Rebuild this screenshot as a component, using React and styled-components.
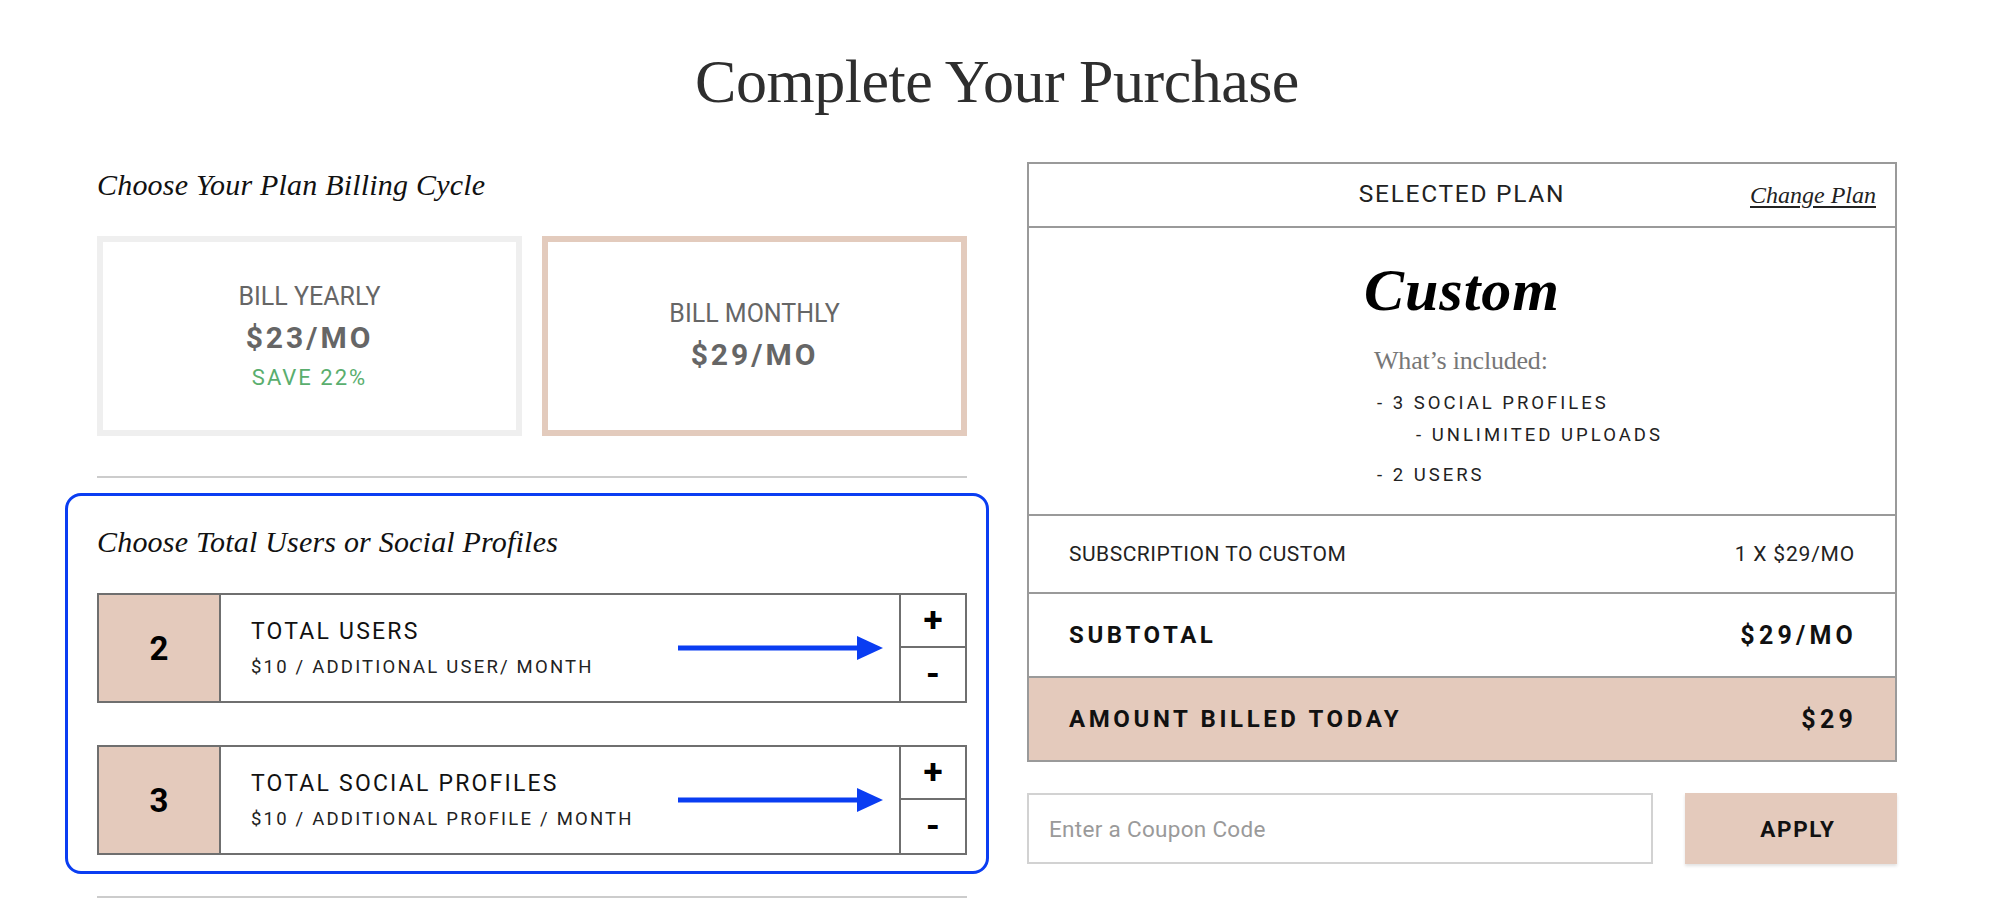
import React from "react";
import styled, { createGlobalStyle } from "styled-components";

const colors = {
  beige: "#e4cabc",
  blue: "#0a3df2",
  line: "#6f6f6f",
  panelLine: "#9a9a9a",
  text: "#1a1a1a",
  muted: "#666666",
  green: "#5aae6e",
};

const GlobalStyle = createGlobalStyle`
  body {
    margin: 0;
    background: #ffffff;
    font-family: Roboto, "Liberation Sans", Arial, sans-serif;
    color: ${colors.text};
  }
`;

const Page = styled.main`
  width: 1800px;
  margin: 0 auto;
  padding-top: 50px;
`;

const Title = styled.h1`
  margin: 0;
  font-family: "Liberation Serif", "Times New Roman", serif;
  font-weight: 400;
  font-size: 62px;
  line-height: 62px;
  letter-spacing: -0.5px;
  text-align: center;
  color: #2e2e2e;
`;

const Columns = styled.div`
  display: grid;
  grid-template-columns: 870px 870px;
  column-gap: 60px;
  align-items: start;
  margin-top: 50px;
`;

const LeftColumn = styled.section`
  display: flex;
  flex-direction: column;
`;

const SectionHeading = styled.h2`
  margin: ${(p) => (p.$first ? "8px 0 36px" : "0 0 36px")};
  font-family: "Liberation Serif", "Times New Roman", serif;
  font-style: italic;
  font-weight: 400;
  font-size: 30px;
  line-height: 30px;
  letter-spacing: 0.2px;
  color: #111111;
`;

const CycleGrid = styled.div`
  display: grid;
  grid-template-columns: 1fr 1fr;
  gap: 20px;
`;

const CycleCard = styled.button`
  height: 200px;
  box-sizing: border-box;
  border: 6px solid ${(p) => (p.$selected ? "#e3cbbd" : "#efefef")};
  background: #ffffff;
  display: flex;
  flex-direction: column;
  align-items: center;
  justify-content: center;
  font-family: inherit;
  cursor: pointer;
  padding: 0;
`;

const CycleName = styled.span`
  font-size: 25px;
  line-height: 30px;
  color: ${colors.muted};
`;

const CyclePrice = styled.span`
  margin-top: 8px;
  font-size: 30px;
  line-height: 36px;
  font-weight: 700;
  letter-spacing: 3px;
  color: ${colors.muted};
`;

const CycleSave = styled.span`
  margin-top: 9px;
  font-size: 22px;
  line-height: 26px;
  letter-spacing: 2px;
  color: ${colors.green};
`;

const Rule = styled.hr`
  margin: ${(p) => p.$margin};
  border: 0;
  height: 2px;
  background: #cccccc;
`;

const Highlight = styled.div`
  margin: 15px -22px 0 -32px;
  padding: 31px 19px 16px 29px;
  border: 3px solid ${colors.blue};
  border-radius: 16px;
`;

const StepperList = styled.div`
  display: flex;
  flex-direction: column;
  gap: 42px;
`;

const StepperRow = styled.div`
  display: grid;
  grid-template-columns: 122px 1fr 66px;
  height: 110px;
  box-sizing: border-box;
  border: 2px solid ${colors.line};
`;

const Count = styled.div`
  display: flex;
  align-items: center;
  justify-content: center;
  background: ${colors.beige};
  border-right: 2px solid ${colors.line};
  font-size: 33px;
  line-height: 33px;
  font-weight: 700;
  color: #000000;
`;

const StepperInfo = styled.div`
  display: flex;
  align-items: center;
  justify-content: space-between;
  padding: 0 16px 0 30px;
`;

const StepperText = styled.div`
  display: flex;
  flex-direction: column;
`;

const StepperTitle = styled.span`
  font-size: 23px;
  line-height: 28px;
  letter-spacing: 2.2px;
  color: #111111;
`;

const StepperHint = styled.span`
  margin-top: 10px;
  font-size: 18.5px;
  line-height: 22px;
  letter-spacing: 2.2px;
  color: #222222;
`;

const StepperButtons = styled.div`
  display: grid;
  grid-template-rows: 1fr 1fr;
  border-left: 2px solid ${colors.line};
`;

const StepButton = styled.button`
  border: 0;
  border-bottom: ${(p) => (p.$top ? `2px solid ${colors.line}` : "0")};
  background: #ffffff;
  padding: 0;
  font-family: inherit;
  font-size: 35px;
  line-height: 34px;
  font-weight: 700;
  color: #000000;
  cursor: pointer;
`;

const Summary = styled.aside`
  display: flex;
  flex-direction: column;
`;

const PlanPanel = styled.div`
  border: 2px solid ${colors.panelLine};
`;

const PanelHeader = styled.div`
  display: grid;
  grid-template-columns: 1fr auto 1fr;
  align-items: center;
  height: 58px;
  padding-bottom: 4px;
  border-bottom: 2px solid ${colors.panelLine};
`;

const PanelLabel = styled.span`
  grid-column: 2;
  font-size: 24.5px;
  letter-spacing: 1.7px;
  color: #222222;
`;

const ChangeLink = styled.a`
  justify-self: end;
  padding-right: 19px;
  padding-top: 4px;
  font-family: "Liberation Serif", "Times New Roman", serif;
  font-style: italic;
  font-size: 24px;
  color: #222222;
  text-decoration: underline;
  text-underline-offset: 3px;
`;

const PlanBody = styled.div`
  padding: 32px 0 23px;
  border-bottom: 2px solid ${colors.panelLine};
`;

const PlanName = styled.div`
  font-family: "Liberation Serif", "Times New Roman", serif;
  font-style: italic;
  font-weight: 700;
  font-size: 60px;
  line-height: 60px;
  letter-spacing: 1px;
  text-align: center;
  color: #000000;
`;

const Included = styled.div`
  margin-top: 28px;
  padding-left: 345px;
`;

const IncludedTitle = styled.div`
  font-family: "Liberation Serif", "Times New Roman", serif;
  font-size: 26px;
  line-height: 26px;
  letter-spacing: -0.2px;
  color: #777777;
`;

const FeatureList = styled.ul`
  margin: 13px 0 0;
  padding: 0;
  list-style: none;
`;

const Feature = styled.li`
  padding-left: ${(p) => (p.$nested ? "42px" : "3px")};
  margin-top: ${(p) => (p.$spaced ? "8px" : "0")};
  font-size: 18.5px;
  line-height: 32px;
  letter-spacing: 3px;
  color: #222222;
`;

const TotalRow = styled.div`
  display: flex;
  align-items: center;
  justify-content: space-between;
  height: ${(p) => p.$height}px;
  padding: 0 40px;
  background: ${(p) => (p.$shaded ? colors.beige : "#ffffff")};
  border-bottom: ${(p) => (p.$last ? "0" : `2px solid ${colors.panelLine}`)};
  font-size: ${(p) => (p.$strong ? "24px" : "21px")};
  font-weight: ${(p) => (p.$strong ? 700 : 400)};
  letter-spacing: ${(p) => (p.$strong ? "3.6px" : "0.5px")};
  color: ${(p) => (p.$strong ? "#111111" : "#222222")};
`;

const TotalValue = styled.span`
  font-size: ${(p) => (p.$wide ? "25px" : "inherit")};
  letter-spacing: ${(p) => (p.$wide ? "4.2px" : "0.8px")};
  margin-right: ${(p) => (p.$wide ? "-2px" : "0")};
`;

const CouponForm = styled.form`
  display: grid;
  grid-template-columns: 1fr 212px;
  column-gap: 32px;
  margin-top: 31px;
`;

const CouponInput = styled.input`
  height: 71px;
  box-sizing: border-box;
  border: 2px solid #d2d2d2;
  padding: 0 20px;
  font-family: inherit;
  font-size: 22.5px;
  letter-spacing: 0.3px;
  color: #222222;
  outline: none;
  &::placeholder {
    color: #9a9a9a;
  }
`;

const ApplyButton = styled.button`
  height: 71px;
  border: 0;
  background: ${colors.beige};
  box-shadow: 0 2px 3px rgba(0, 0, 0, 0.12);
  padding: 0 0 0 14px;
  font-family: inherit;
  font-size: 22.5px;
  font-weight: 700;
  letter-spacing: 1.6px;
  color: #111111;
  cursor: pointer;
`;

function Arrow() {
  return (
    <svg width="205" height="26" viewBox="0 0 205 26">
      <line x1="0" y1="13" x2="182" y2="13" stroke={colors.blue} strokeWidth="5" />
      <polygon points="179,1 205,13 179,25" fill={colors.blue} />
    </svg>
  );
}

const steppers = [
  { count: 2, title: "TOTAL USERS", hint: "$10 / ADDITIONAL USER/ MONTH" },
  { count: 3, title: "TOTAL SOCIAL PROFILES", hint: "$10 / ADDITIONAL PROFILE / MONTH" },
];

export default function App() {
  return (
    <>
      <GlobalStyle />
      <Page>
        <Title>Complete Your Purchase</Title>
        <Columns>
          <LeftColumn>
            <SectionHeading $first>Choose Your Plan Billing Cycle</SectionHeading>
            <CycleGrid>
              <CycleCard type="button">
                <CycleName>BILL YEARLY</CycleName>
                <CyclePrice>$23/MO</CyclePrice>
                <CycleSave>SAVE 22%</CycleSave>
              </CycleCard>
              <CycleCard type="button" $selected>
                <CycleName>BILL MONTHLY</CycleName>
                <CyclePrice>$29/MO</CyclePrice>
              </CycleCard>
            </CycleGrid>
            <Rule $margin="40px 0 0" />
            <Highlight>
              <SectionHeading>Choose Total Users or Social Profiles</SectionHeading>
              <StepperList>
                {steppers.map((s) => (
                  <StepperRow key={s.title}>
                    <Count>{s.count}</Count>
                    <StepperInfo>
                      <StepperText>
                        <StepperTitle>{s.title}</StepperTitle>
                        <StepperHint>{s.hint}</StepperHint>
                      </StepperText>
                      <Arrow />
                    </StepperInfo>
                    <StepperButtons>
                      <StepButton type="button" $top>+</StepButton>
                      <StepButton type="button">-</StepButton>
                    </StepperButtons>
                  </StepperRow>
                ))}
              </StepperList>
            </Highlight>
            <Rule $margin="22px 0 0" />
          </LeftColumn>

          <Summary>
            <PlanPanel>
              <PanelHeader>
                <PanelLabel>SELECTED PLAN</PanelLabel>
                <ChangeLink href="#">Change Plan</ChangeLink>
              </PanelHeader>
              <PlanBody>
                <PlanName>Custom</PlanName>
                <Included>
                  <IncludedTitle>What’s included:</IncludedTitle>
                  <FeatureList>
                    <Feature>- 3 SOCIAL PROFILES</Feature>
                    <Feature $nested>- UNLIMITED UPLOADS</Feature>
                    <Feature $spaced>- 2 USERS</Feature>
                  </FeatureList>
                </Included>
              </PlanBody>
              <TotalRow $height={76}>
                <span>SUBSCRIPTION TO CUSTOM</span>
                <TotalValue>1 X $29/MO</TotalValue>
              </TotalRow>
              <TotalRow $height={82} $strong>
                <span>SUBTOTAL</span>
                <TotalValue $wide>$29/MO</TotalValue>
              </TotalRow>
              <TotalRow $height={82} $strong $shaded $last>
                <span>AMOUNT BILLED TODAY</span>
                <TotalValue $wide>$29</TotalValue>
              </TotalRow>
            </PlanPanel>
            <CouponForm onSubmit={(e) => e.preventDefault()}>
              <CouponInput placeholder="Enter a Coupon Code" />
              <ApplyButton type="submit">APPLY</ApplyButton>
            </CouponForm>
          </Summary>
        </Columns>
      </Page>
    </>
  );
}
